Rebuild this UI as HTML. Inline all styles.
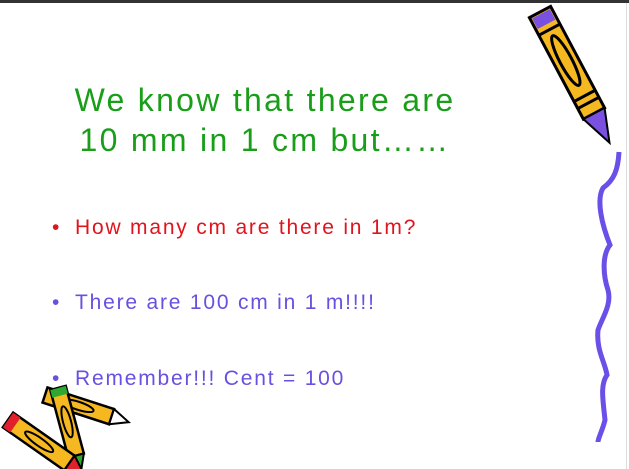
<!DOCTYPE html><html><head><style>
body{margin:0;width:629px;height:469px;background:#fff;position:relative;overflow:hidden;font-family:"Comic Sans MS","Liberation Sans",sans-serif}
.bar{position:absolute;left:0;top:0;width:629px;height:3px;background:#333}
.edge{position:absolute;left:626px;top:3px;width:1px;height:466px;background:#ddd}
.t{position:absolute;left:40px;width:450px;text-align:center;color:#1a9e1a;font-size:32px;line-height:40px;letter-spacing:2.3px}
.b{position:absolute;left:52px;font-size:21px;white-space:nowrap;letter-spacing:1.8px}
.b span{display:inline-block;width:23px}
</style></head><body>
<div class="bar"></div><div class="edge"></div>
<div class="t" style="top:80px">We know that there are<br>10 mm in 1 cm but……</div>
<div class="b" style="top:216px;color:#e0141e"><span>•</span>How many cm are there in 1m?</div>
<div class="b" style="top:291px;color:#6a50e0"><span>•</span>There are 100 cm in 1 m!!!!</div>
<div class="b" style="top:367px;color:#6a50e0"><span>•</span>Remember!!! Cent = 100</div>
<svg width="629" height="469" style="position:absolute;left:0;top:0">
<path d="M619,152 C618,170 614,180 603,188 C596,200 602,225 610,245 C602,255 603,275 608,290 C612,305 602,318 598,330 C596,350 605,362 607,375 C600,385 603,400 605,420 C602,432 598,438 598,442" stroke="#6a4fe8" stroke-width="5" fill="none"/>
<g transform="translate(540,12) rotate(-28)">
<rect x="-12" y="0" width="24" height="115" fill="#f5b820" stroke="#000" stroke-width="3"/>
<rect x="-10" y="2" width="20" height="12" fill="#7a50e0"/>
<ellipse cx="0" cy="55" rx="6" ry="28" fill="none" stroke="#000" stroke-width="3"/>
<path d="M-12,20 H12 M-12,95 H12 M-12,103 H12" stroke="#000" stroke-width="3"/>
<path d="M-12,115 L0,148 L12,115 Z" fill="#7a50e0" stroke="#000" stroke-width="2"/>
</g>
<g transform="translate(45,395) rotate(-72)">
<rect x="-8" y="0" width="16" height="70" fill="#f5b820" stroke="#000" stroke-width="2.5"/>
<ellipse cx="0" cy="35" rx="4" ry="16" fill="none" stroke="#000" stroke-width="2"/>
<path d="M-8,70 L0,88 L8,70Z" fill="#fff" stroke="#000" stroke-width="2"/>
</g>
<g transform="translate(58,388) rotate(-15)">
<rect x="-8" y="0" width="16" height="70" fill="#f5b820" stroke="#000" stroke-width="2.5"/>
<rect x="-8" y="0" width="16" height="8" fill="#2fa82f"/>
<ellipse cx="0" cy="35" rx="4" ry="16" fill="none" stroke="#000" stroke-width="2"/>
<path d="M-8,70 L0,88 L8,70Z" fill="#2fa82f" stroke="#000" stroke-width="2"/>
</g>
<g transform="translate(8,420) rotate(-55)">
<rect x="-9" y="0" width="18" height="75" fill="#f5b820" stroke="#000" stroke-width="2.5"/>
<rect x="-9" y="0" width="18" height="9" fill="#e0202a"/>
<ellipse cx="0" cy="38" rx="4" ry="17" fill="none" stroke="#000" stroke-width="2"/>
<path d="M-9,75 L0,92 L9,75Z" fill="#e0202a" stroke="#000" stroke-width="2"/>
</g>
</svg>
</body></html>
